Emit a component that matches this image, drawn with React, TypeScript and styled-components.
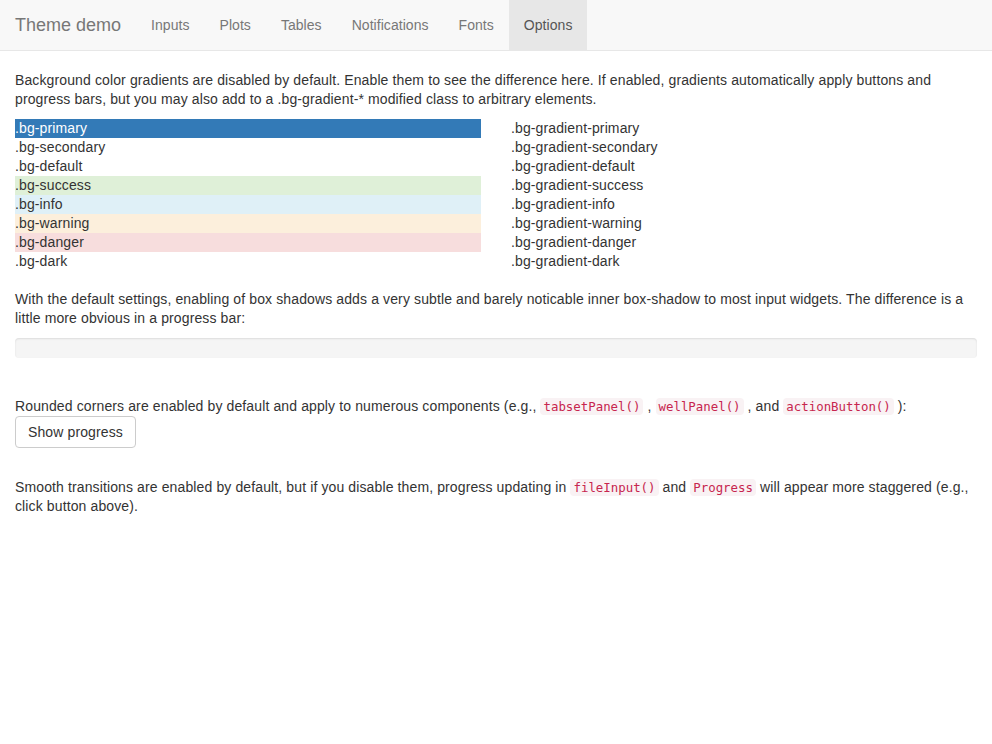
import styled, { createGlobalStyle } from "styled-components";

const Global = createGlobalStyle`
  body {
    margin: 0;
    font-family: "Liberation Sans", Arial, sans-serif;
    font-size: 14px;
    line-height: 19px;
    letter-spacing: 0.12px;
    color: #333;
    background: #fff;
  }
  * { box-sizing: border-box; }
`;

const Navbar = styled.nav`
  display: flex;
  align-items: stretch;
  height: 51px;
  background: #f8f8f8;
  border-bottom: 1px solid #e7e7e7;
  margin-bottom: 20px;
`;

const Brand = styled.div`
  padding: 0 15px;
  display: flex;
  align-items: center;
  font-size: 18px;
  letter-spacing: 0;
  color: #777;
`;

const NavLink = styled.a<{ $active?: boolean }>`
  display: flex;
  align-items: center;
  padding: 0 15px;
  color: ${(p) => (p.$active ? "#555" : "#777")};
  background: ${(p) => (p.$active ? "#e7e7e7" : "transparent")};
  text-decoration: none;
  font-size: 14px;
  letter-spacing: 0.05px;
`;

const Container = styled.div`
  padding: 0 15px;
`;

const Para = styled.p<{ $mb?: number }>`
  margin: 0 0 ${(p) => p.$mb ?? 10}px;
`;

const Row = styled.div`
  display: grid;
  grid-template-columns: 1fr 1fr;
  margin: 0 -15px 19px;
`;

const Col = styled.div`
  padding: 0 15px;
`;

const Swatch = styled.div<{ $bg: string; $fg?: string }>`
  background: ${(p) => p.$bg};
  color: ${(p) => p.$fg ?? "#333"};
  height: 19px;
`;

const Progress = styled.div`
  height: 20px;
  background: #f5f5f5;
  border-radius: 4px;
  box-shadow: inset 0 1px 2px rgba(0, 0, 0, 0.1);
  margin-bottom: 39px;
`;

const Code = styled.code`
  font-family: "DejaVu Sans Mono", "Liberation Mono", monospace;
  font-size: 12.4px;
  letter-spacing: 0;
  color: #c7254e;
  background: #f9f2f4;
  padding: 1px 3px;
  border-radius: 4px;
`;

const Button = styled.button`
  font-family: inherit;
  font-size: 14px;
  line-height: 20px;
  letter-spacing: 0.12px;
  color: #333;
  background: #fff;
  border: 1px solid #ccc;
  border-radius: 4px;
  padding: 5px 12px;
  height: 32px;
  margin-bottom: 30px;
  cursor: pointer;
`;

const swatches = [
  { name: "primary", bg: "#337ab7", fg: "#fff" },
  { name: "secondary", bg: "transparent" },
  { name: "default", bg: "transparent" },
  { name: "success", bg: "#dff0d8" },
  { name: "info", bg: "#dff0f7" },
  { name: "warning", bg: "#fcefdc" },
  { name: "danger", bg: "#f7dddd" },
  { name: "dark", bg: "transparent" },
];

const tabs = ["Inputs", "Plots", "Tables", "Notifications", "Fonts", "Options"];

export default function App() {
  return (
    <>
      <Global />
      <Navbar>
        <Brand>Theme demo</Brand>
        {tabs.map((t) => (
          <NavLink key={t} $active={t === "Options"}>
            {t}
          </NavLink>
        ))}
      </Navbar>
      <Container>
        <Para>
          Background color gradients are disabled by default. Enable them to see the difference here. If enabled,
          gradients automatically apply buttons and progress bars, but you may also add to a .bg-gradient-* modified
          class to arbitrary elements.
        </Para>
        <Row>
          <Col>
            {swatches.map((s) => (
              <Swatch key={s.name} $bg={s.bg} $fg={s.fg}>
                .bg-{s.name}
              </Swatch>
            ))}
          </Col>
          <Col>
            {swatches.map((s) => (
              <Swatch key={s.name} $bg="transparent">
                .bg-gradient-{s.name}
              </Swatch>
            ))}
          </Col>
        </Row>
        <Para>
          With the default settings, enabling of box shadows adds a very subtle and barely noticable inner box-shadow
          to most input widgets. The difference is a little more obvious in a progress bar:
        </Para>
        <Progress />
        <Para $mb={0}>
          Rounded corners are enabled by default and apply to numerous components (e.g., <Code>tabsetPanel()</Code> ,{" "}
          <Code>wellPanel()</Code> , and <Code>actionButton()</Code> ):
        </Para>
        <Button>Show progress</Button>
        <Para>
          Smooth transitions are enabled by default, but if you disable them, progress updating in{" "}
          <Code>fileInput()</Code> and <Code>Progress</Code> will appear more staggered (e.g., click button above).
        </Para>
      </Container>
    </>
  );
}
